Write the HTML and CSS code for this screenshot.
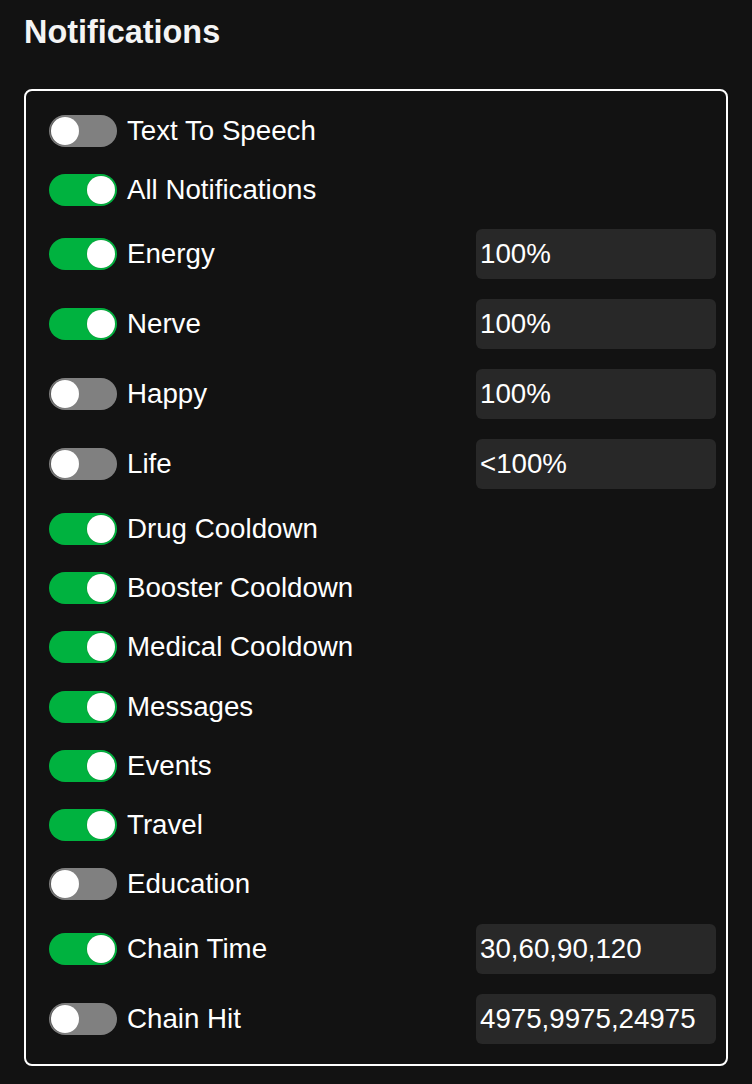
FILE: index.html
```html
<!DOCTYPE html>
<html lang="en">
<head>
<meta charset="utf-8">
<title>Notifications</title>
<link rel="stylesheet" href="styles.css">
</head>
<body>
<div class="page">
  <h1 class="title">Notifications</h1>
  <div class="panel">
    <div class="row"><span class="toggle"></span><span class="label">Text To Speech</span></div>
    <div class="row"><span class="toggle on"></span><span class="label">All Notifications</span></div>
    <div class="row tall"><span class="toggle on"></span><span class="label">Energy</span><input class="field" type="text" value="100%"></div>
    <div class="row tall"><span class="toggle on"></span><span class="label">Nerve</span><input class="field" type="text" value="100%"></div>
    <div class="row tall"><span class="toggle"></span><span class="label">Happy</span><input class="field" type="text" value="100%"></div>
    <div class="row tall"><span class="toggle"></span><span class="label">Life</span><input class="field" type="text" value="&lt;100%"></div>
    <div class="row"><span class="toggle on"></span><span class="label">Drug Cooldown</span></div>
    <div class="row"><span class="toggle on"></span><span class="label">Booster Cooldown</span></div>
    <div class="row"><span class="toggle on"></span><span class="label">Medical Cooldown</span></div>
    <div class="row"><span class="toggle on"></span><span class="label">Messages</span></div>
    <div class="row"><span class="toggle on"></span><span class="label">Events</span></div>
    <div class="row"><span class="toggle on"></span><span class="label">Travel</span></div>
    <div class="row"><span class="toggle"></span><span class="label">Education</span></div>
    <div class="row tall"><span class="toggle on"></span><span class="label">Chain Time</span><input class="field" type="text" value="30,60,90,120"></div>
    <div class="row tall"><span class="toggle"></span><span class="label">Chain Hit</span><input class="field" type="text" value="4975,9975,24975"></div>
  </div>
</div>
</body>
</html>
```

FILE: styles.css
```css
html, body {
  margin: 0;
  padding: 0;
  background: #121212;
  color: #ffffff;
  font-family: "Liberation Sans", Arial, sans-serif;
}

.page {
  padding: 14px 24px 20px;
}

.title {
  margin: 0 0 38px;
  font-size: 32.4px;
  font-weight: bold;
  line-height: 37px;
  color: #f4f4f4;
}

.panel {
  border: 2px solid #ffffff;
  border-radius: 8px;
  padding: 20px 10px 20px 23px;
  display: flex;
  flex-direction: column;
  gap: 20px;
}

.row {
  display: flex;
  align-items: center;
  gap: 10px;
  height: 39.2px;
}

.row.tall {
  height: 50px;
}

.toggle {
  position: relative;
  flex: 0 0 68px;
  width: 68px;
  height: 32px;
  border-radius: 16px;
  background: #808080;
}

.toggle::after {
  content: "";
  position: absolute;
  top: 2px;
  left: 2px;
  width: 28px;
  height: 28px;
  border-radius: 50%;
  background: #ffffff;
  box-shadow: -1px 0 1px rgba(0, 0, 0, 0.35);
}

.toggle.on {
  background: #00b23f;
}

.toggle.on::after {
  left: 38px;
  box-shadow: 0 0 0 0.5px #109a3a;
}

.label {
  flex: 1;
  font-size: 27.7px;
  color: #ffffff;
}

.field {
  box-sizing: border-box;
  width: 240px;
  height: 50px;
  border: none;
  outline: none;
  border-radius: 6px;
  background: #282828;
  color: #ffffff;
  padding: 0 4px;
  margin: 0;
  font-family: "Liberation Sans", Arial, sans-serif;
  font-size: 27.7px;
}
```
